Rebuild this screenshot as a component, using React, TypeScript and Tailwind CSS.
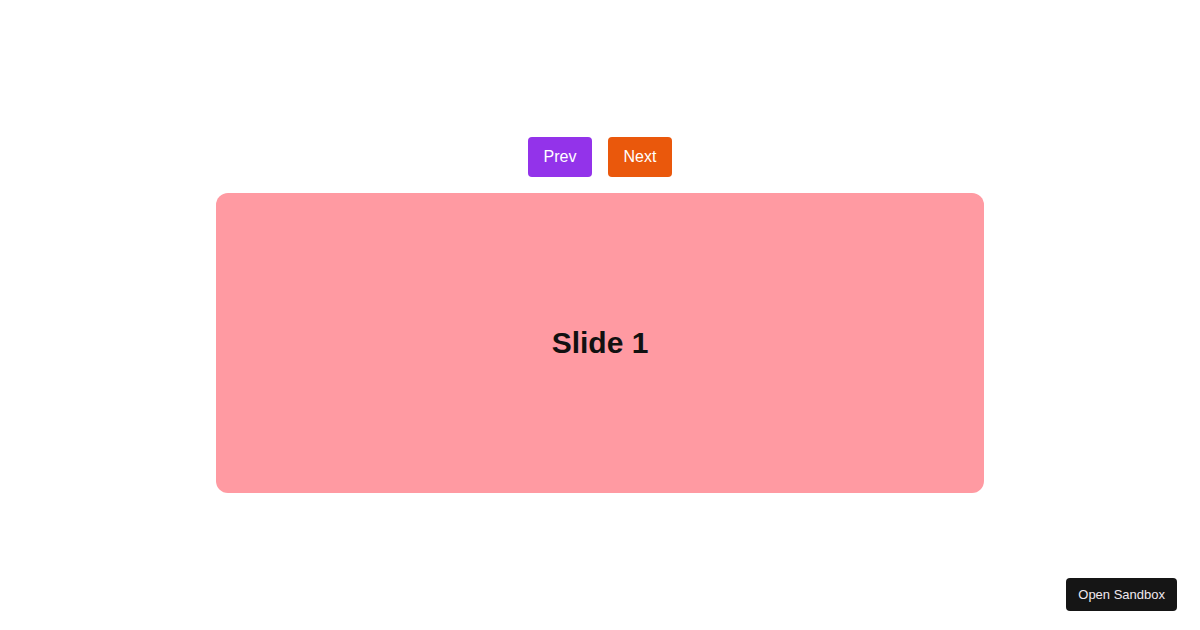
import React, { useState } from "react";

const slides = [
  { title: "Slide 1", color: "#ff9aa2" },
  { title: "Slide 2", color: "#ffb7b2" },
  { title: "Slide 3", color: "#ffdac1" },
];

export default function App() {
  const [i, setI] = useState(0);
  const s = slides[i];
  return (
    <div
      className="min-h-screen flex flex-col items-center justify-center bg-white"
      style={{ fontFamily: '"Liberation Sans", Arial, sans-serif' }}
    >
      <div className="flex gap-4 mb-4">
        <button
          onClick={() => setI((i - 1 + slides.length) % slides.length)}
          className="h-10 w-16 rounded bg-[#9333ea] text-white text-base"
        >
          Prev
        </button>
        <button
          onClick={() => setI((i + 1) % slides.length)}
          className="h-10 w-16 rounded bg-[#ea580c] text-white text-base"
        >
          Next
        </button>
      </div>
      <div
        className="w-[768px] h-[300px] rounded-xl flex items-center justify-center"
        style={{ backgroundColor: s.color }}
      >
        <h2 className="text-3xl font-bold text-[#111111]">{s.title}</h2>
      </div>
      <button className="fixed right-[23px] bottom-[19px] h-[33px] px-[12px] rounded bg-[#151515] text-[13px] text-[#f0e8f0]">
        Open Sandbox
      </button>
    </div>
  );
}
